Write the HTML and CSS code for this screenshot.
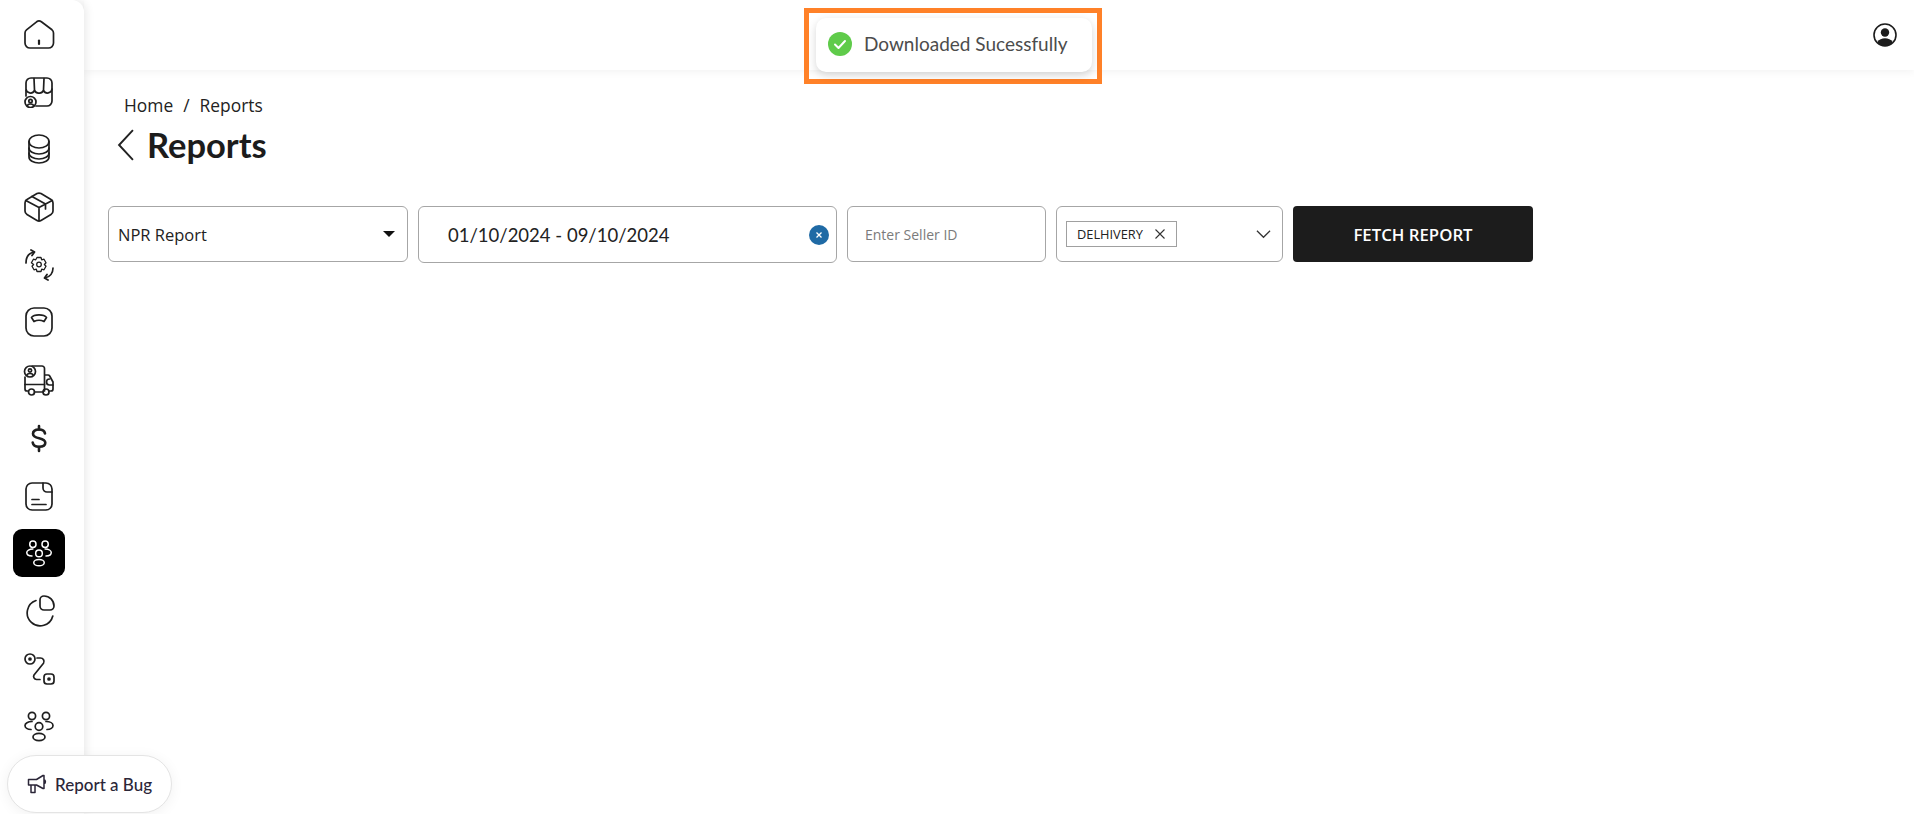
FILE: index.html
```html
<!DOCTYPE html>
<html lang="en">
<head>
<meta charset="utf-8">
<title>Reports</title>
<link rel="stylesheet" href="styles.css">
</head>
<body>
<svg class="defs" width="0" height="0" aria-hidden="true">
  <symbol id="people" viewBox="0 0 32 32">
    <circle cx="9" cy="6" r="3.6"/><circle cx="23" cy="6" r="3.6"/><circle cx="16" cy="16.5" r="3.8"/>
    <ellipse cx="16" cy="27" rx="6" ry="3.6"/>
    <path d="M9 11.5C5 11.5 2 13.2 2 15.5S4.5 19.5 8 19.5"/><path d="M23 11.5C27 11.5 30 13.2 30 15.5S27.5 19.5 24 19.5"/>
  </symbol>
</svg>

<div class="app">
  <nav class="sidebar">
    <a class="nav-item"><svg class="ico" viewBox="0 0 32 32"><path d="M13.6 3.8a4 4 0 0 1 4.8 0l10.6 8a4 4 0 0 1 1.5 3.1V25a5 5 0 0 1-5 5H7a5 5 0 0 1-5-5V14.9a4 4 0 0 1 1.5-3.1Z"/><path d="M16 22.5V26" stroke-width="2.2"/></svg></a>
    <a class="nav-item"><svg class="ico" viewBox="0 0 32 32"><path d="M3 13V7a5 5 0 0 1 5-5h16a5 5 0 0 1 5 5v6a4.500 4.500 0 0 1-8.500 1.500A4.600 4.600 0 0 1 16 17a4.600 4.600 0 0 1-4.500-2.500A4.500 4.500 0 0 1 3 13Z"/><path d="M11 2.500 11.500 14M21 2.500 20.500 14"/><path d="M29 13v12a5 5 0 0 1-5 5H13M3 14v6"/><circle cx="7.500" cy="26" r="5.500"/><circle cx="7.500" cy="25" r="1.700"/><path d="M4.500 29.500c.5-2 5.500-2 6 0"/></svg></a>
    <a class="nav-item"><svg class="ico" viewBox="0 0 32 32"><ellipse cx="16" cy="8.500" rx="10" ry="6.500"/><path d="M6 8.500v15.500c0 3.500 4.500 6 10 6s10-2.500 10-6V8.500"/><path d="M6 15c0 3.500 4.500 6 10 6s10-2.500 10-6M6 20c0 3.500 4.500 6 10 6s10-2.500 10-6"/></svg></a>
    <a class="nav-item"><svg class="ico" viewBox="0 0 32 32"><path d="M14 2.600a4 4 0 0 1 4 0l10 5.800a4 4 0 0 1 2 3.500v8.200a4 4 0 0 1-2 3.500l-10 5.800a4 4 0 0 1-4 0L4 23.600a4 4 0 0 1-2-3.500v-8.200a4 4 0 0 1 2-3.500Z"/><path d="M2.800 9.500 16 16.500l13.200-7M16 16.500V30M9 5.500l13.500 7.500v5"/></svg></a>
    <a class="nav-item"><svg class="ico" viewBox="0 0 32 32"><path d="M3 14C3 8 6 4 11 3"/><path d="M8 1 11.500 3 9 6.500" stroke-width="1.800"/><path d="M30 19c0 5-3 9-8 10"/><path d="M25 31l-3.500-2 2.500-3.500" stroke-width="1.800"/><g stroke-width="1.300"><path d="M14 8.500h4l.7 2.300 2.300-.6 2 3.500-1.600 1.800 1.600 1.800-2 3.500-2.300-.6-.7 2.300h-4l-.7-2.300-2.300.6-2-3.500 1.600-1.800L8.400 13.700l2-3.500 2.300.6Z"/><circle cx="16" cy="15.500" r="2.300"/></g></svg></a>
    <a class="nav-item"><svg class="ico" viewBox="0 0 32 32"><rect x="3" y="2" width="26" height="28" rx="8"/><path d="M8.500 11.500c2.500-3.500 12.500-3.500 15 0l-2.500 4c-3-1.500-7-1.500-10 0Z"/></svg></a>
    <a class="nav-item"><svg class="ico" viewBox="0 0 32 32"><path d="M9 2h10a2.500 2.500 0 0 1 2.500 2.500V27M21.500 11H25a2 2 0 0 1 1.700 1L30 18v7a2 2 0 0 1-2 2h-2M2 13v12a2 2 0 0 0 2 2h1"/><path d="M2 20.500h19.500M26.500 15a3 3 0 0 0 0 6H30"/><circle cx="8.500" cy="28" r="3"/><circle cx="23" cy="28" r="3"/><path d="M11.500 28H20"/><circle cx="7" cy="7.500" r="5.500"/><circle cx="7" cy="6.500" r="1.600"/><path d="M4 11c.5-2 5.500-2 6 0"/></svg></a>
    <a class="nav-item"><svg class="ico ico-bold" viewBox="0 0 32 32"><path d="M22 11.500C21.500 8.500 19 7.500 16 7.500c-3.500 0-6 1.500-6 4.200 0 6.300 12.300 2.800 12.300 9.100 0 2.700-2.800 4-6.300 4-3.300 0-5.800-1.300-6.300-4.300"/><path d="M16 4v3.500M16 25v4"/></svg></a>
    <a class="nav-item"><svg class="ico" viewBox="0 0 32 32"><rect x="3" y="3" width="26" height="27" rx="6"/><path d="M20 3v5a4 4 0 0 0 4 4h5M9 19.500h7M9 24.500h14"/></svg></a>
    <a class="nav-item nav-active"><svg class="ico"><use href="#people"/></svg></a>
    <a class="nav-item"><svg class="ico" viewBox="0 0 32 32"><path d="M13 5.500A13 13 0 1 0 29.800 21"/><path d="M17 10V6a4 4 0 0 1 4-4 10 10 0 0 1 10 10 4 4 0 0 1-4 4h-6a4 4 0 0 1-4-4Z" transform="translate(0 -1)"/></svg></a>
    <a class="nav-item"><svg class="ico" viewBox="0 0 32 32"><circle cx="7" cy="6" r="5"/><circle cx="7" cy="6" r="1" fill="currentColor"/><rect x="21" y="21" width="10" height="10" rx="3"/><circle cx="26" cy="26" r="1" fill="currentColor"/><path d="M14 5h3.500a3.500 3.500 0 0 1 3 5.300L11 22a3 3 0 0 0 2.500 4.500H17"/></svg></a>
    <a class="nav-item"><svg class="ico"><use href="#people"/></svg></a>
  </nav>

  <div class="main">
    <header class="topbar">
      <svg class="user-ico" viewBox="0 0 24 24"><circle cx="12" cy="12" r="11" class="user-ring"/><circle cx="12" cy="9.500" r="4.200" class="user-fill"/><path class="user-fill" d="M4.200 19.300C6 16.300 9 15.300 12 15.300s6 1 7.800 4A11 11 0 0 1 12 23a11 11 0 0 1-7.800-3.700Z"/></svg>
    </header>
    <section class="content">
      <div class="crumbs"><span>Home</span><span class="crumb-sep">/</span><span>Reports</span></div>
      <div class="title-row">
        <svg class="back" viewBox="0 0 16 30"><path d="M14.500 1 1.500 15l13 14"/></svg>
        <h1>Reports</h1>
      </div>
      <div class="filters">
        <div class="field f-select"><span>NPR Report</span><i class="caret"></i></div>
        <div class="field f-date"><span>01/10/2024 - 09/10/2024</span>
          <span class="clear"><svg viewBox="0 0 10 10"><path d="M2.500 2.500l5 5M7.500 2.500l-5 5"/></svg></span>
        </div>
        <div class="field f-seller"><span>Enter Seller ID</span></div>
        <div class="field f-multi">
          <span class="chip">DELHIVERY<svg viewBox="0 0 10 10"><path d="M.5.500l9 9M9.500.500l-9 9"/></svg></span>
          <svg class="chev" viewBox="0 0 16 10"><path d="M1 1.500l7 7 7-7"/></svg>
        </div>
        <button class="fetch" type="button">FETCH REPORT</button>
      </div>
    </section>
  </div>
</div>

<div class="toast-mark">
  <div class="toast">
    <svg class="check" viewBox="0 0 24 24"><circle cx="12" cy="12" r="12"/><path d="M7 12.500l3.500 3.500L17 9"/></svg>
    <span>Downloaded Sucessfully</span>
  </div>
</div>

<div class="bug">
  <svg viewBox="0 0 20 20"><path d="M1.500 5.500h8L16 1.500h1v13h-1l-6.500-3.500h-8ZM4 11v7.500h4V11M17 5.500a2.500 2.500 0 0 1 0 4.500"/></svg>
  <span>Report a Bug</span>
</div>
</body>
</html>
```

FILE: styles.css
```css
* { box-sizing: border-box; }
html, body { margin: 0; height: 100%; }
body { background: #fff; color: #1c1c1c; font-family: "Open Sans", sans-serif; overflow: hidden; }
.defs { position: absolute; }

.app { display: flex; height: 814px; }

.sidebar {
  width: 84px;
  flex: none;
  display: flex;
  flex-direction: column;
  align-items: center;
  padding: 10px 6px 0 0;
  gap: 9.7px;
  background: #fff;
  border-top-right-radius: 12px;
  box-shadow: 2px 0 10px rgba(0, 0, 0, .09);
  position: relative;
  z-index: 2;
}
.nav-item {
  width: 52px;
  height: 48px;
  display: flex;
  align-items: center;
  justify-content: center;
  border-radius: 9px;
  color: #1f1f1f;
}
.nav-active { background: #000; color: #fff; }
.ico {
  width: 32px;
  height: 32px;
  fill: none;
  stroke: currentColor;
  stroke-width: 1.7;
  stroke-linecap: round;
  stroke-linejoin: round;
}
.ico-bold { stroke-width: 2.6; }
.nav-active .ico { width: 28px; height: 28px; }

.main { flex: 1; min-width: 0; display: flex; flex-direction: column; }
.topbar {
  height: 70px;
  display: flex;
  align-items: center;
  justify-content: flex-end;
  padding-right: 17px;
  background: #fff;
  box-shadow: 0 2px 8px rgba(0, 0, 0, .05);
}
.user-ico { width: 24px; height: 24px; }
.user-ring { fill: none; stroke: #1c1c1c; stroke-width: 1.6; }
.user-fill { fill: #1c1c1c; }

.content { padding: 24px 0 0 24px; }
.crumbs {
  display: flex;
  gap: 10px;
  padding-left: 16px;
  font-size: 17.4px;
  font-weight: 500;
  line-height: 22px;
  color: #222;
}
.crumb-sep { font-weight: 400; }
.title-row { display: flex; align-items: center; gap: 12px; margin-top: 7px; padding-left: 9px; height: 44px; }
.back { width: 18px; height: 32px; fill: none; stroke: #222; stroke-width: 1.8; }
h1 { margin: 0; font: 700 34.5px/44px Lato, sans-serif; color: #1c1c1c; }

.filters { display: flex; gap: 10px; margin-top: 39px; align-items: flex-start; }
.field {
  height: 56px;
  display: flex;
  align-items: center;
  background: #fff;
  border: 1px solid #a6a6a6;
  border-radius: 6px;
}
.f-select { width: 300px; padding: 0 12px 0 9px; justify-content: space-between; font-size: 16.5px; color: #222; }
.caret { width: 0; height: 0; border: 6.5px solid transparent; border-top: 6.5px solid #111; border-bottom: 0; }
.f-date { width: 419px; height: 57px; padding: 0 7px 0 29px; justify-content: space-between; font: 400 18.5px Lato, sans-serif; color: #222; }
.clear { width: 20px; height: 20px; border-radius: 50%; background: #1f6aa5; display: flex; align-items: center; justify-content: center; }
.clear svg { width: 10px; height: 10px; fill: none; stroke: #fff; stroke-width: 1.3; }
.f-seller { width: 199px; padding-left: 17px; font-size: 14px; color: #7b7b7b; }
.f-multi { width: 227px; padding: 0 11px 0 9px; justify-content: space-between; }
.chip {
  height: 26px;
  width: 111px;
  display: flex;
  align-items: center;
  gap: 12px;
  padding-left: 10px;
  border: 1px solid #a0a0a0;
  font-size: 12.8px;
  color: #222;
}
.chip svg { width: 10px; height: 10px; fill: none; stroke: #333; stroke-width: 1.1; }
.chev { width: 15px; height: 10px; fill: none; stroke: #333; stroke-width: 1.3; }
.fetch {
  width: 240px;
  height: 56px;
  border: 0;
  border-radius: 4px;
  background: #1c1c1c;
  color: #fff;
  font: 600 16.8px "Open Sans", sans-serif;
}

.toast-mark {
  position: absolute;
  left: 804px;
  top: 8px;
  width: 298px;
  height: 76px;
  padding: 5px 5px 7px 7px;
  border: 5px solid #ff8128;
  z-index: 5;
}
.toast {
  height: 100%;
  display: flex;
  align-items: center;
  gap: 12px;
  padding: 0 0 3px 12px;
  background: #fff;
  border-radius: 10px;
  box-shadow: 0 3px 8px rgba(0, 0, 0, .16);
  font: 400 19px Lato, sans-serif;
  color: #4c4c4c;
}
.check { width: 24px; height: 24px; flex: none; }
.check circle { fill: #5fcb4a; }
.check path { fill: none; stroke: #fff; stroke-width: 2; stroke-linecap: round; stroke-linejoin: round; }

.bug {
  position: absolute;
  left: 7px;
  top: 755px;
  width: 165px;
  height: 58px;
  display: flex;
  align-items: center;
  gap: 8px;
  padding-left: 19px;
  background: #fff;
  border: 1px solid #e4e4e4;
  border-radius: 29px;
  box-shadow: 0 2px 14px rgba(0, 0, 0, .06);
  font: 500 17px Lato, sans-serif;
  color: #2b2638;
  z-index: 6;
}
.bug svg { width: 20px; height: 20px; fill: none; stroke: #2b2638; stroke-width: 1.5; stroke-linejoin: round; }
```
